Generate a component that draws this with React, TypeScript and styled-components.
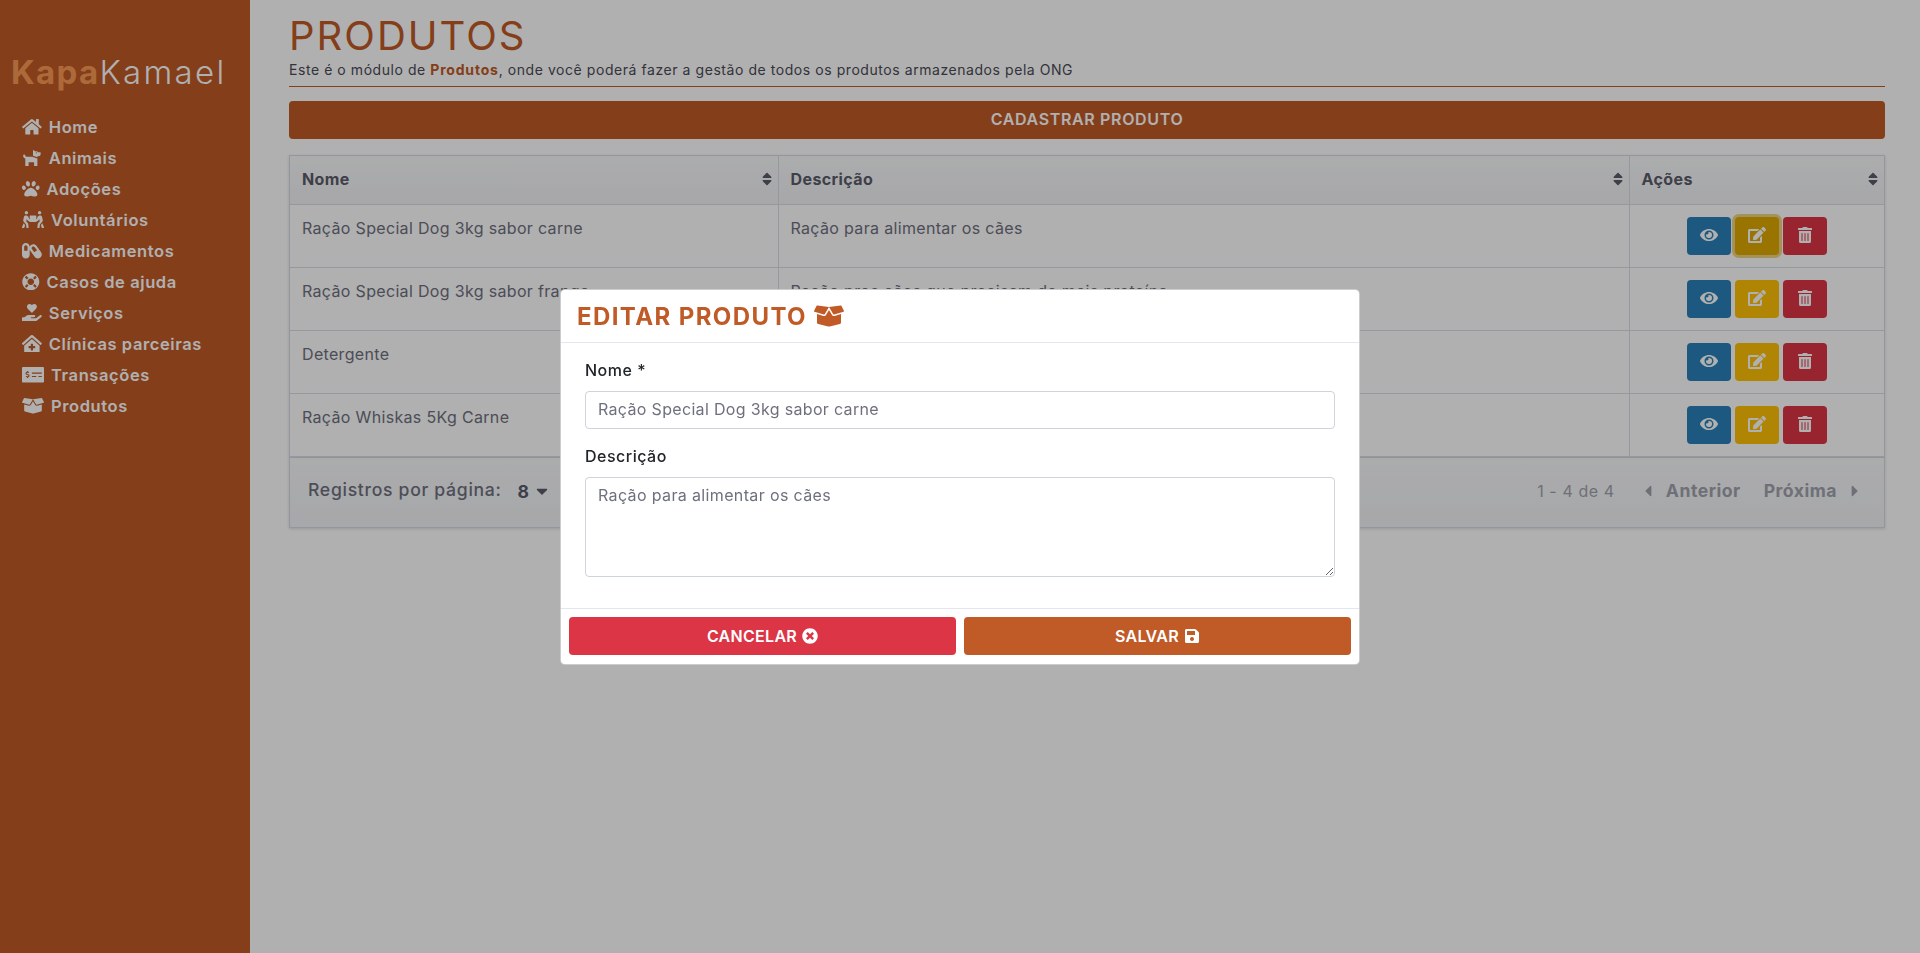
import React from "react";
import styled, { createGlobalStyle } from "styled-components";
import {
  FaBoxOpen,
  FaCaretDown,
  FaCaretLeft,
  FaCaretRight,
  FaCapsules,
  FaClinicMedical,
  FaDog,
  FaEdit,
  FaEye,
  FaHandHoldingHeart,
  FaHome,
  FaLifeRing,
  FaMoneyCheckAlt,
  FaPaw,
  FaPeopleCarry,
  FaSave,
  FaSort,
  FaTimesCircle,
  FaTrashAlt,
} from "react-icons/fa";

const font = `Inter, "Open Sans", "Liberation Sans", sans-serif`;
const brand = "#c05a26";

const GlobalStyle = createGlobalStyle`
  html, body {
    margin: 0;
    padding: 0;
    height: 100%;
    background: #fff;
    font-family: ${font};
    overflow: hidden;
  }
  * { box-sizing: border-box; }
`;

const Layout = styled.div`
  display: flex;
  height: 953px;
`;

const Sidebar = styled.aside`
  width: 250px;
  flex-shrink: 0;
  background: ${brand};
  padding-top: 52px;
`;

const Logo = styled.div`
  height: 40px;
  line-height: 40px;
  padding-left: 11px;
  font-size: 33px;
  font-weight: 300;
  color: #fff;
  letter-spacing: 2.3px;
  white-space: nowrap;

  b {
    font-weight: 700;
    color: #fa9a55;
    letter-spacing: 1.3px;
  }
`;

const Nav = styled.nav`
  margin-top: 19px;
  padding-left: 22px;
  display: flex;
  flex-direction: column;
`;

const NavItem = styled.a`
  height: 31px;
  display: flex;
  align-items: center;
  gap: 7px;
  color: #fff;
  font-size: 16.5px;
  font-weight: 600;
  letter-spacing: 0.6px;
`;

const NavIcon = styled.span<{ $width: number }>`
  display: flex;
  flex-shrink: 0;

  svg {
    height: 17.6px;
    width: ${(p) => p.$width}px;
  }
`;

const Main = styled.main`
  flex: 1;
  padding: 12px 35px 0 39px;
  min-width: 0;
`;

const Title = styled.h1`
  margin: 0;
  font-size: 40px;
  line-height: 48px;
  font-weight: 400;
  letter-spacing: 2px;
  color: ${brand};
`;

const Subtitle = styled.p`
  margin: 0;
  height: 27px;
  line-height: 19px;
  font-size: 14px;
  color: #4a4b55;
  letter-spacing: 0.56px;
  border-bottom: 1px solid ${brand};

  b {
    color: ${brand};
    font-weight: 700;
    letter-spacing: 0.8px;
  }
`;

const CreateButton = styled.button`
  display: block;
  width: 100%;
  height: 38px;
  margin-top: 14px;
  padding: 0 0 2px;
  border: none;
  border-radius: 4px;
  background: ${brand};
  color: #fff;
  font-family: ${font};
  font-size: 16px;
  font-weight: 600;
  letter-spacing: 0.65px;
`;

const TableCard = styled.div`
  margin-top: 16px;
  border: 1px solid #d7dae4;
  box-shadow: 0 1px 3px rgba(0, 0, 0, 0.14);
  background: #fff;
`;

const Table = styled.table`
  width: 100%;
  border-collapse: collapse;
  table-layout: fixed;
`;

const HeadCell = styled.th<{ $width?: number }>`
  ${(p) => (p.$width ? `width: ${p.$width}px;` : "")}
  height: 48px;
  padding: 0 6px 2px 12px;
  background: linear-gradient(#f9fafb, #f1f2f5);
  border-right: 1px solid #dadce6;
  border-bottom: 1px solid #dadce6;
  text-align: left;
  font-size: 16px;
  font-weight: 700;
  letter-spacing: 0.4px;
  color: #5a5c69;
  &:last-child { border-right: none; }
`;

const HeadInner = styled.div`
  display: flex;
  align-items: center;
  justify-content: space-between;

  svg {
    width: 10px;
    height: 16px;
    color: #5a5c69;
  }
`;

const Cell = styled.td`
  height: 63px;
  padding: 12px;
  vertical-align: top;
  border-right: 1px solid #dadce6;
  border-bottom: 1px solid #dadce6;
  font-size: 16px;
  line-height: 22px;
  color: #6e707e;
  letter-spacing: 0.33px;
  white-space: nowrap;
  &:last-child { border-right: none; }
`;

const Actions = styled.div`
  display: flex;
  justify-content: center;
  gap: 4px;
`;

const ActionButton = styled.button<{ $bg: string; $focus?: boolean }>`
  width: 44px;
  height: 38px;
  border: none;
  border-radius: 4px;
  padding: 0 0 2px;
  display: flex;
  align-items: center;
  justify-content: center;
  color: #fff;
  background: ${(p) => p.$bg};
  ${(p) => (p.$focus ? "box-shadow: 0 0 0 3px rgba(222, 170, 12, 0.5);" : "")}

  svg {
    width: 18px;
    height: 16px;
  }
`;

const Pagination = styled.div`
  height: 70px;
  border-top: 1px solid #d3d5df;
  background: linear-gradient(#f8f9fa, #f2f3f6);
  display: flex;
  align-items: center;
  justify-content: space-between;
  padding: 0 25px 0 18px;
`;

const PageSize = styled.div`
  display: flex;
  align-items: center;
  font-size: 17.6px;
  font-weight: 500;
  color: #6e707e;
  letter-spacing: 0.7px;
  margin-top: -6px;
`;

const PageSizeValue = styled.span`
  margin: 4px 0 0 16px;
  display: flex;
  align-items: center;
  gap: 6px;
  font-weight: 700;
  color: #5a5c69;

  svg {
    width: 12px;
    height: 18px;
  }
`;

const PageNav = styled.div`
  display: flex;
  align-items: center;
  font-size: 17.6px;
  color: #a1a3ad;
  font-weight: 700;
  letter-spacing: 0.5px;
  margin-top: -3px;

  svg {
    width: 8px;
    height: 18px;
  }
`;

const PageInfo = styled.span`
  font-size: 16px;
  font-weight: 400;
  margin-right: 6px;
  letter-spacing: 0.6px;
`;

const PageLink = styled.span`
  display: flex;
  align-items: center;
  gap: 14px;
  margin-left: 23px;
`;

const Backdrop = styled.div`
  position: fixed;
  inset: 0;
  background: rgba(0, 0, 0, 0.31);
  display: flex;
  justify-content: center;
  align-items: flex-start;
  padding-top: 289px;
`;

const Modal = styled.div`
  width: 800px;
  height: 376px;
  background: #fff;
  border: 1px solid rgba(0, 0, 0, 0.2);
  border-radius: 5px;
  display: flex;
  flex-direction: column;
`;

const ModalHeader = styled.div`
  height: 53px;
  flex-shrink: 0;
  border-bottom: 1px solid #e3e6f0;
  display: flex;
  align-items: center;
  gap: 7px;
  padding-left: 16px;
  color: ${brand};
  font-size: 24px;
  font-weight: 700;
  letter-spacing: 1.4px;

  svg {
    width: 30px;
    height: 24px;
  }
`;

const ModalBody = styled.div`
  flex: 1;
  padding: 15px 24px 0;
`;

const Label = styled.label`
  display: block;
  height: 33px;
  line-height: 24px;
  font-size: 16px;
  font-weight: 500;
  color: #212529;
  letter-spacing: 0.5px;
`;

const TextInput = styled.input`
  display: block;
  width: 100%;
  height: 38px;
  padding: 0 12px 2px;
  margin-bottom: 15px;
  border: 1px solid #ced4da;
  border-radius: 4px;
  font-family: ${font};
  font-size: 16px;
  color: #6e707e;
  letter-spacing: 0.33px;
  outline: none;
`;

const TextArea = styled.textarea`
  display: block;
  width: 100%;
  height: 100px;
  padding: 5px 12px;
  border: 1px solid #ced4da;
  border-radius: 4px;
  font-family: ${font};
  font-size: 16px;
  line-height: 24px;
  color: #6e707e;
  letter-spacing: 0.36px;
  outline: none;
`;

const ModalFooter = styled.div`
  height: 56px;
  flex-shrink: 0;
  border-top: 1px solid #e3e6f0;
  padding: 8px;
  display: flex;
  gap: 8px;
`;

const FooterButton = styled.button<{ $bg: string }>`
  flex: 1;
  height: 38px;
  border: none;
  border-radius: 4px;
  background: ${(p) => p.$bg};
  color: #fff;
  font-family: ${font};
  font-size: 16px;
  font-weight: 600;
  letter-spacing: 0.3px;
  display: flex;
  align-items: center;
  justify-content: center;
  gap: 5px;
`;

const menu = [
  { label: "Home", icon: <FaHome />, width: 19.8 },
  { label: "Animais", icon: <FaDog />, width: 19.8 },
  { label: "Adoções", icon: <FaPaw />, width: 17.6 },
  { label: "Voluntários", icon: <FaPeopleCarry />, width: 22 },
  { label: "Medicamentos", icon: <FaCapsules />, width: 19.8 },
  { label: "Casos de ajuda", icon: <FaLifeRing />, width: 17.6 },
  { label: "Serviços", icon: <FaHandHoldingHeart />, width: 19.8 },
  { label: "Clínicas parceiras", icon: <FaClinicMedical />, width: 19.8 },
  { label: "Transações", icon: <FaMoneyCheckAlt />, width: 22 },
  { label: "Produtos", icon: <FaBoxOpen />, width: 22 },
];

const products = [
  { name: "Ração Special Dog 3kg sabor carne", description: "Ração para alimentar os cães" },
  { name: "Ração Special Dog 3kg sabor frango", description: "Ração pros cães que precisam de mais proteína" },
  { name: "Detergente", description: "Detergente para limpeza" },
  { name: "Ração Whiskas 5Kg Carne", description: "Ração para alimentar os gatos" },
];

function App() {
  return (
    <>
      <GlobalStyle />
      <Layout>
        <Sidebar>
          <Logo>
            <b>Kapa</b>Kamael
          </Logo>
          <Nav>
            {menu.map((item) => (
              <NavItem key={item.label}>
                <NavIcon $width={item.width}>{item.icon}</NavIcon>
                {item.label}
              </NavItem>
            ))}
          </Nav>
        </Sidebar>

        <Main>
          <Title>PRODUTOS</Title>
          <Subtitle>
            Este é o módulo de <b>Produtos</b>, onde você poderá fazer a gestão de todos os produtos armazenados pela ONG
          </Subtitle>
          <CreateButton>CADASTRAR PRODUTO</CreateButton>

          <TableCard>
            <Table>
              <thead>
                <tr>
                  <HeadCell $width={488}>
                    <HeadInner>Nome <FaSort /></HeadInner>
                  </HeadCell>
                  <HeadCell $width={851}>
                    <HeadInner>Descrição <FaSort /></HeadInner>
                  </HeadCell>
                  <HeadCell>
                    <HeadInner>Ações <FaSort /></HeadInner>
                  </HeadCell>
                </tr>
              </thead>
              <tbody>
                {products.map((product, index) => (
                  <tr key={product.name}>
                    <Cell>{product.name}</Cell>
                    <Cell>{product.description}</Cell>
                    <Cell>
                      <Actions>
                        <ActionButton $bg="#2980b9"><FaEye /></ActionButton>
                        <ActionButton $bg={index === 0 ? "#e0a800" : "#ffc107"} $focus={index === 0}><FaEdit /></ActionButton>
                        <ActionButton $bg="#dc3545"><FaTrashAlt /></ActionButton>
                      </Actions>
                    </Cell>
                  </tr>
                ))}
              </tbody>
            </Table>
            <Pagination>
              <PageSize>
                Registros por página:
                <PageSizeValue>8 <FaCaretDown /></PageSizeValue>
              </PageSize>
              <PageNav>
                <PageInfo>1 - 4 de 4</PageInfo>
                <PageLink><FaCaretLeft /> Anterior</PageLink>
                <PageLink>Próxima <FaCaretRight /></PageLink>
              </PageNav>
            </Pagination>
          </TableCard>
        </Main>
      </Layout>

      <Backdrop>
        <Modal>
          <ModalHeader>
            EDITAR PRODUTO <FaBoxOpen />
          </ModalHeader>
          <ModalBody>
            <Label>Nome *</Label>
            <TextInput readOnly value="Ração Special Dog 3kg sabor carne" />
            <Label>Descrição</Label>
            <TextArea readOnly value="Ração para alimentar os cães" />
          </ModalBody>
          <ModalFooter>
            <FooterButton $bg="#dc3545">CANCELAR <FaTimesCircle /></FooterButton>
            <FooterButton $bg={brand}>SALVAR <FaSave /></FooterButton>
          </ModalFooter>
        </Modal>
      </Backdrop>
    </>
  );
}

export default App;
